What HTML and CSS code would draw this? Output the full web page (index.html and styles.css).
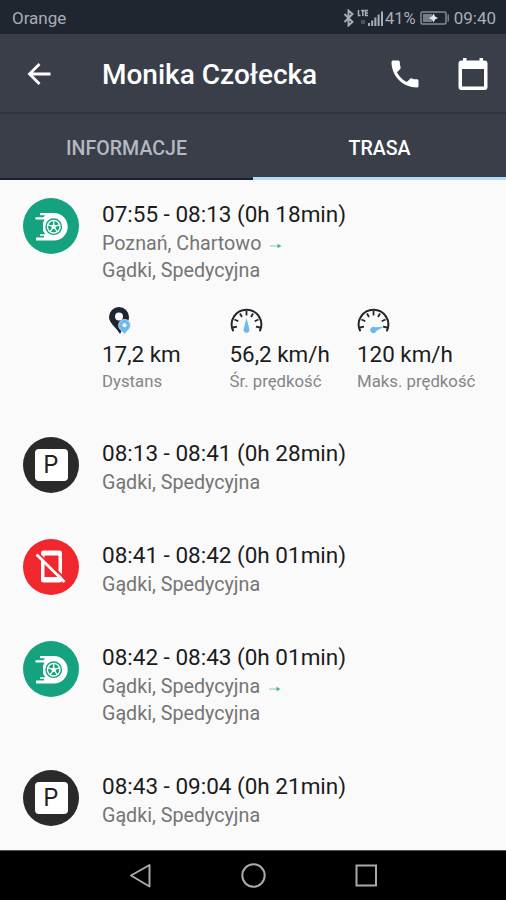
FILE: index.html
```html
<!DOCTYPE html>
<html lang="pl">
<head>
    <meta charset="UTF-8">
    <meta name="viewport" content="width=device-width, initial-scale=1.0">
    <title>Monika Czołecka</title>
    <link rel="stylesheet" href="styles.css">
</head>
<body>
    <!-- Shared icons -->
    <svg class="sprite" aria-hidden="true">
        <symbol id="wheel" viewBox="0 0 56 56">
            <path fill="#fff" d="M17 15h14a13.700 13.700 0 0 1 0 27.400H13v-2.800h8v-1.800h-4v-1.600h5.500l-2.500-3.500v-8l1.500-3.200h-9v-2.300h8l1.500-2h-5z"/>
            <circle cx="30.700" cy="28.700" r="8.400" fill="#15a37f"/>
            <circle cx="30.700" cy="28.700" r="6.300" fill="none" stroke="#fff" stroke-width="1.400"/>
            <circle cx="30.700" cy="28.700" r="2.300" fill="#fff"/>
            <path stroke="#fff" stroke-width="1.300" d="M30.700 28.700v-6M30.700 28.700l5.700-1.900M30.700 28.700l3.500 4.900M30.700 28.700l-3.500 4.900M30.700 28.700l-5.700-1.900"/>
        </symbol>
        <symbol id="arrow" viewBox="0 0 14 8">
            <path d="M1 4h9" stroke="#a5dccd" stroke-width="1.400"/>
            <path d="M8.500 1.800l4 2.200l-4 2.200z" fill="#43b898"/>
        </symbol>
        <symbol id="gauge" viewBox="0 0 34 28">
            <path fill="none" stroke="#22262b" stroke-width="2" stroke-linecap="round" d="M3 23.500a14.800 14.800 0 1 1 27 0"/>
            <path fill="none" stroke="#22262b" stroke-width="1.800" d="M3 20.500l4-.8M30 20.500l-4-.8M4.500 12.500l3.800 1.800M10 6.500l2 3.500M16.500 4v4.500M23 6.500l-2 3.500M28.500 12.500l-3.800 1.800"/>
        </symbol>
    </svg>

    <div class="status-bar">
        <span class="carrier">Orange</span>
        <svg class="bluetooth" width="12" height="18" viewBox="0 0 12 18">
            <path fill="none" stroke="#a9adb5" stroke-width="1.900" d="M1.500 5l8 8l-4 3.500v-15l4 3.500l-8 8"/>
        </svg>
        <svg class="signal" width="28" height="18" viewBox="0 0 28 18">
            <path fill="none" stroke="#a9adb5" stroke-width="1.500" d="M1.500 1v5.500h2M4 1.500h3.500M5.800 1.500v5.500M11 1.500H8.500v5H11M8.500 4H11"/>
            <path fill="#4c535e" d="M4 11h4v4H4z"/>
            <path fill="#a9adb5" d="M11 14h2v3h-2zM14.200 11.500h2V17h-2zM17.400 8.500h2V17h-2zM20.600 5.500h2V17h-2zM24 2.500h2V17h-2z"/>
        </svg>
        <span class="percent">41%</span>
        <svg class="battery" width="30" height="14" viewBox="0 0 30 14">
            <rect x="1" y="1" width="25" height="12" rx="1.500" fill="none" stroke="#858b95" stroke-width="1.500"/>
            <path fill="#777d87" d="M3 3h9v8H3zM27.500 3.500H29v7h-1.500z"/>
            <path fill="#e2e4e7" d="M13.500 2.500l1.600 2.900l3 1.600l-3 1.600l-1.600 2.900l-1.600-2.900l-3-1.600l3-1.600z"/>
        </svg>
        <span class="clock">09:40</span>
    </div>

    <header class="toolbar">
        <svg class="back" width="26" height="26" viewBox="0 0 26 26">
            <path fill="none" stroke="#fff" stroke-width="2.800" d="M13.500 3L3.500 13l10 10M3.500 13H24.500"/>
        </svg>
        <h1>Monika Czołecka</h1>
        <svg class="phone" width="36" height="36" viewBox="0 0 24 24">
            <path fill="#fff" d="M6.620 10.790c1.440 2.830 3.760 5.140 6.590 6.590l2.200-2.200c.27-.27.67-.36 1.020-.24 1.120.37 2.330.57 3.570.57.55 0 1 .45 1 1V20c0 .55-.45 1-1 1-9.390 0-17-7.610-17-17 0-.55.45-1 1-1h3.500c.55 0 1 .45 1 1 0 1.250.2 2.450.57 3.570.11.35.03.74-.25 1.020z"/>
        </svg>
        <svg class="calendar" width="32" height="34" viewBox="0 0 32 34">
            <path fill="#fff" fill-rule="evenodd" d="M6 1h3.500v2.500h13V1H26v2.500h1.500a3 3 0 0 1 3 3V30a3 3 0 0 1-3 3h-23a3 3 0 0 1-3-3V6.500a3 3 0 0 1 3-3H6zM5 12v17.500h22V12z"/>
        </svg>
    </header>

    <nav class="tabs">
        <a class="tab">INFORMACJE</a>
        <a class="tab active">TRASA</a>
    </nav>

    <main class="route">
        <section class="entry">
            <div class="badge drive"><svg width="56" height="56"><use href="#wheel"/></svg></div>
            <div class="details">
                <h2>07:55 - 08:13 (0h 18min)</h2>
                <p>Poznań, Chartowo <svg class="arrow" width="14" height="8"><use href="#arrow"/></svg></p>
                <p>Gądki, Spedycyjna</p>
                <div class="stats">
                    <div class="stat">
                        <svg width="34" height="28" viewBox="0 0 34 28">
                            <path fill="#1d2630" fill-rule="evenodd" d="M17 0a10 10 0 0 1 10 10c0 7-6 11-9 17C14 20 7 16 7 10A10 10 0 0 1 17 0zM17 5.500a4 4 0 1 0 0 8a4 4 0 0 0 0-8z"/>
                            <path fill="#6db9f0" stroke="#fafafa" stroke-width=".6" d="M22.500 12.300a6 6 0 0 1 6 6c0 4-4 5.500-6 9.500c-2-4-6-5.500-6-9.500a6 6 0 0 1 6-6z"/>
                            <circle cx="22.500" cy="18.200" r="2" fill="#fff"/>
                        </svg>
                        <strong>17,2 km</strong>
                        <span>Dystans</span>
                    </div>
                    <div class="stat">
                        <svg width="34" height="28">
                            <use href="#gauge"/>
                            <path fill="#6db9f0" d="M16.500 11l2.700 10.500a3 3 0 1 1-5.400 0z"/>
                        </svg>
                        <strong>56,2 km/h</strong>
                        <span>Śr. prędkość</span>
                    </div>
                    <div class="stat">
                        <svg width="34" height="28">
                            <use href="#gauge"/>
                            <path fill="#6db9f0" d="M27 19.800l-7.500 4a3.200 3.200 0 1 1-1.500-3.500z"/>
                        </svg>
                        <strong>120 km/h</strong>
                        <span>Maks. prędkość</span>
                    </div>
                </div>
            </div>
        </section>

        <section class="entry">
            <div class="badge parking"><span>P</span></div>
            <div class="details">
                <h2>08:13 - 08:41 (0h 28min)</h2>
                <p>Gądki, Spedycyjna</p>
            </div>
        </section>

        <section class="entry">
            <div class="badge offline">
                <svg width="56" height="56" viewBox="0 0 56 56">
                    <path fill="#fff" fill-rule="evenodd" d="M20.500 11.500h16a2.500 2.500 0 0 1 2.500 2.500v27a2.500 2.500 0 0 1-2.500 2.500h-16a2.500 2.500 0 0 1-2.500-2.500V14a2.500 2.500 0 0 1 2.500-2.500zM21.500 16.500v21.500h14V16.500z"/>
                    <path stroke="#f0282d" stroke-width="2" d="M16.500 15.500l26 24.500"/>
                    <path stroke="#fff" stroke-width="2.800" d="M13.500 15.500l28 27.500"/>
                </svg>
            </div>
            <div class="details">
                <h2>08:41 - 08:42 (0h 01min)</h2>
                <p>Gądki, Spedycyjna</p>
            </div>
        </section>

        <section class="entry">
            <div class="badge drive"><svg width="56" height="56"><use href="#wheel"/></svg></div>
            <div class="details">
                <h2>08:42 - 08:43 (0h 01min)</h2>
                <p>Gądki, Spedycyjna <svg class="arrow" width="14" height="8"><use href="#arrow"/></svg></p>
                <p>Gądki, Spedycyjna</p>
            </div>
        </section>

        <section class="entry">
            <div class="badge parking"><span>P</span></div>
            <div class="details">
                <h2>08:43 - 09:04 (0h 21min)</h2>
                <p>Gądki, Spedycyjna</p>
            </div>
        </section>
    </main>

    <footer class="nav-bar">
        <svg width="24" height="26" viewBox="0 0 24 26">
            <path fill="none" stroke="#aaa" stroke-width="2" stroke-linejoin="round" d="M21.500 2v21.500L3 12.500z"/>
        </svg>
        <svg width="26" height="26" viewBox="0 0 26 26">
            <circle cx="13.500" cy="12.500" r="11.200" fill="none" stroke="#aaa" stroke-width="2"/>
        </svg>
        <svg width="24" height="26" viewBox="0 0 24 26">
            <rect x="2.500" y="2.500" width="19.500" height="20" fill="none" stroke="#aaa" stroke-width="2"/>
        </svg>
    </footer>
</body>
</html>
```

FILE: styles.css
```css
* {
    box-sizing: border-box;
}
body {
    margin: 0;
    height: 900px;
    display: flex;
    flex-direction: column;
    background: #fafafa;
    font-family: Roboto, "Noto Sans", sans-serif;
    overflow: hidden;
}
svg {
    display: block;
    flex: none;
}
h1, h2, p {
    margin: 0;
    font-weight: 400;
    white-space: nowrap;
}
.sprite {
    position: absolute;
    width: 0;
    height: 0;
}

/* Status bar */
.status-bar {
    flex: none;
    display: flex;
    align-items: center;
    height: 34px;
    padding: 2px 10px 0 12px;
    background: #1f2630;
    color: #a9adb5;
    font-size: 17px;
}
.carrier {
    flex: 1;
}
.signal {
    margin-left: 2px;
}
.percent {
    font-size: 16.5px;
}
.battery {
    margin: 0 4px;
}

/* Toolbar */
.toolbar {
    flex: none;
    display: flex;
    align-items: center;
    height: 80px;
    padding: 0 17px 0 26px;
    background: #3a3e49;
    border-bottom: 2px solid #30353f;
}
.back {
    margin-top: 1px;
}
.toolbar h1 {
    flex: 1;
    margin-left: 50px;
    padding-top: 2px;
    color: #fff;
    font-size: 28px;
    font-weight: 500;
}
.phone {
    margin-top: 1px;
}
.calendar {
    margin: 1px 0 0 34px;
}

/* Tabs */
.tabs {
    flex: none;
    display: flex;
    height: 66px;
    background: #3a3e49;
}
.tab {
    flex: 1;
    display: flex;
    align-items: center;
    justify-content: center;
    padding-top: 5px;
    border-bottom: 2px solid #18202c;
    color: #b5b8c0;
    font-size: 19.6px;
    font-weight: 500;
}
.tab.active {
    border-bottom: 3px solid #b3dcf8;
    color: #fff;
}

/* Route list */
.route {
    flex: 1;
    min-height: 0;
    overflow: hidden;
    padding: 18.4px 0 0 23px;
}
.entry {
    display: flex;
    margin-bottom: 42.7px;
}
.badge {
    flex: none;
    display: flex;
    align-items: center;
    justify-content: center;
    width: 56px;
    height: 56px;
    border-radius: 50%;
}
.drive {
    background: #15a37f;
}
.parking {
    background: #2a2a2a;
}
.offline {
    background: #f0282d;
}
.parking span {
    width: 33px;
    height: 32px;
    border-radius: 4px;
    background: #fff;
    color: #222;
    font: 24px/32px Inter, sans-serif;
    text-align: center;
}
.details {
    margin-left: 23px;
}
.details h2 {
    padding: 1px 0 2px;
    color: #1c1c1c;
    font-size: 22.5px;
    line-height: 30px;
}
.details p {
    color: #757575;
    font-size: 19.7px;
    line-height: 26.5px;
}
.arrow {
    display: inline-block;
    margin-left: 3px;
}
.stats {
    display: flex;
    margin-top: 23px;
    padding-bottom: 1px;
}
.stat {
    display: flex;
    flex-direction: column;
    width: 127.5px;
    white-space: nowrap;
}
.stat strong {
    margin-top: 6px;
    color: #1c1c1c;
    font-size: 22.4px;
    font-weight: 400;
    line-height: 27px;
}
.stat span {
    margin-top: 1px;
    color: #858585;
    font-size: 16.8px;
    line-height: 24px;
}

/* System navigation */
.nav-bar {
    flex: none;
    display: flex;
    align-items: center;
    justify-content: center;
    gap: 88px;
    height: 50px;
    background: #000;
    border-top: 1px solid #555;
}
```
